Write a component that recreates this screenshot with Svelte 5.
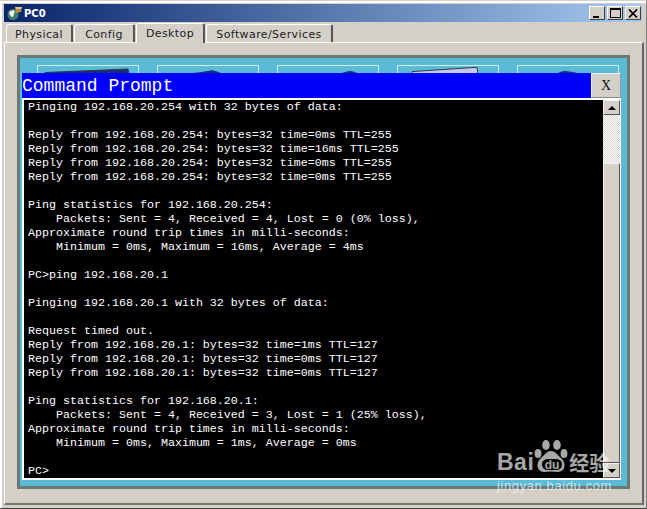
<script>
const tabs = [
  { name: 'Physical', w: 67 },
  { name: 'Config', w: 61 },
  { name: 'Desktop', w: 69, active: true },
  { name: 'Software/Services', w: 127 }
]

// what shows of each desktop app icon above the command window
const cards = [
  { d: 'M7 6.5 L90 3 L91 8 L7 9 Z', fill: '#1c2a78', edge: '#2a3a4a' },
  { d: 'M29 8 Q44 7 54 4.7 Q60 6 64 8 Z', fill: '#1a2a80', edge: '#1a2a80' },
  { d: 'M62 8 Q68 6 72 5.5 Q77 6 80 8 Z', fill: '#1a2a80', edge: '#1a2a80' },
  { d: 'M14 5.6 L79 1.3 L80 9 L14 9 Z', fill: '#c8c8e8', edge: '#333a48' },
  { d: 'M39 8 Q43 5.5 47 5.5 Q54 6 62 8 Z', fill: '#1a2a80', edge: '#1a2a80' }
]

const output = `Pinging 192.168.20.254 with 32 bytes of data:

Reply from 192.168.20.254: bytes=32 time=0ms TTL=255
Reply from 192.168.20.254: bytes=32 time=16ms TTL=255
Reply from 192.168.20.254: bytes=32 time=0ms TTL=255
Reply from 192.168.20.254: bytes=32 time=0ms TTL=255

Ping statistics for 192.168.20.254:
    Packets: Sent = 4, Received = 4, Lost = 0 (0% loss),
Approximate round trip times in milli-seconds:
    Minimum = 0ms, Maximum = 16ms, Average = 4ms

PC>ping 192.168.20.1

Pinging 192.168.20.1 with 32 bytes of data:

Request timed out.
Reply from 192.168.20.1: bytes=32 time=1ms TTL=127
Reply from 192.168.20.1: bytes=32 time=0ms TTL=127
Reply from 192.168.20.1: bytes=32 time=0ms TTL=127

Ping statistics for 192.168.20.1:
    Packets: Sent = 4, Received = 3, Lost = 1 (25% loss),
Approximate round trip times in milli-seconds:
    Minimum = 0ms, Maximum = 1ms, Average = 0ms

PC>`
</script>

<div class="window">
  <div class="titlebar">
    <svg class="appicon" width="16" height="15" viewBox="0 0 16 15">
      <circle cx="6" cy="8.5" r="5.5" fill="#3f7f6a" />
      <path d="M2 6 Q5 3 8 5 L6 11 Q3 11 2 6 Z" fill="#e6efe8" />
      <path d="M8 1 L15 1 L14 6 L9 7 Z" fill="#b08a4a" />
      <path d="M8 1 L15 1 L14 3 L9 3 Z" fill="#e0c890" />
    </svg>
    <span class="pcname">PC0</span>
    <div class="winbtns">
      <button class="winbtn"><i class="min"></i></button>
      <button class="winbtn"><i class="max"></i></button>
      <button class="winbtn">
        <svg width="10" height="9" viewBox="0 0 10 9"><path d="M1 0.5 L9 8.5 M9 0.5 L1 8.5" stroke="#000" stroke-width="1.7" /></svg>
      </button>
    </div>
  </div>

  <div class="tabs">
    {#each tabs as tab}
      <div class="tab" class:active={tab.active} style="width: {tab.w}px">{tab.name}</div>
    {/each}
  </div>

  <div class="panel">
    <div class="desktop">
      <div class="cards">
        {#each cards as card}
          <div class="card">
            <svg width="100" height="9" viewBox="0 0 100 9">
              <path d={card.d} fill={card.fill} stroke={card.edge} stroke-width="1" />
            </svg>
          </div>
        {/each}
      </div>

      <div class="cmd">
        <div class="cmdhead">
          <span class="cmdtitle">Command Prompt</span>
          <button class="cmdclose">X</button>
        </div>
        <div class="cmdbody">
          <pre class="term">{output}</pre>
          <div class="scrollbar">
            <div class="sbtn"><i class="up"></i></div>
            <div class="track"></div>
            <div class="thumb"></div>
            <div class="sbtn"><i class="down"></i></div>
          </div>
        </div>
      </div>
    </div>
  </div>

  <div class="watermark">
    <div class="wm-row">
      <span class="bai">Bai</span>
      <svg class="paw" width="34" height="33" viewBox="0 0 34 33">
        <ellipse cx="4" cy="13.5" rx="3.4" ry="4.6" />
        <ellipse cx="12" cy="5" rx="3.8" ry="5" />
        <ellipse cx="23" cy="5" rx="3.8" ry="5" />
        <ellipse cx="30" cy="13.5" rx="3.4" ry="4.6" />
        <path d="M17 11 C22 11 23 15 27 18 C33 23 31 32 24 32 Q17 31 10 32 C3 32 1 23 7 18 C11 15 12 11 17 11 Z" />
        <rect x="8" y="19" width="20" height="11" rx="5.5" class="hole" />
        <text x="18" y="28.5" text-anchor="middle" class="du">du</text>
      </svg>
      <span class="jy">经验</span>
    </div>
    <div class="wm-url">jingyan.baidu.com</div>
  </div>
</div>

<style>
:global(body) {
  margin: 0;
  background: #d4d0c8;
}

.window {
  position: relative;
  box-sizing: border-box;
  width: 647px;
  height: 509px;
  padding: 4px 2px 3px 4px;
  display: flex;
  flex-direction: column;
  background: #d4d0c8;
  border-top: 1px solid #d4d0c8;
  border-right: 1px solid #808080;
  border-bottom: 1px solid #404040;
  box-shadow: inset 1px 1px 0 #fff, inset 2px 2px 0 #fff;
  font-family: "DejaVu Sans", sans-serif;
  overflow: hidden;
}

.titlebar {
  height: 18px;
  margin-top: -1px;
  margin-right: 2px;
  display: flex;
  align-items: center;
  padding: 0 1px 0 3px;
  background: linear-gradient(90deg, #0a246a, #a6caf0);
  flex: none;
}

.appicon {
  margin-right: 1px;
}

.pcname {
  color: #fff;
  font-size: 10px;
  font-weight: bold;
}

.winbtns {
  margin-left: auto;
  display: flex;
  gap: 2px;
}

.winbtn {
  width: 16px;
  height: 14px;
  padding: 0;
  display: flex;
  align-items: center;
  justify-content: center;
  background: #d4d0c8;
  border: 1px solid;
  border-color: #fff #404040 #404040 #fff;
}

.min {
  width: 6px;
  height: 2px;
  background: #000;
  margin-top: 7px;
  margin-right: 3px;
}

.max {
  width: 9px;
  height: 7px;
  border: 1px solid #000;
  border-top-width: 2px;
}

.tabs {
  height: 20px;
  padding-left: 2px;
  display: flex;
  gap: 1px;
  align-items: flex-end;
  flex: none;
}

.tab {
  box-sizing: border-box;
  height: 18px;
  text-align: center;
  font-size: 11px;
  line-height: 19px;
  letter-spacing: 0.4px;
  color: #222;
  background: #d4d0c8;
  border: 1px solid #fff;
  border-right: 2px solid #555;
  border-bottom: none;
  border-radius: 3px 3px 0 0;
}

.tab.active {
  height: 20px;
  line-height: 19px;
  margin-bottom: -1px;
  position: relative;
}

.panel {
  flex: 1;
  box-sizing: border-box;
  padding: 12px 12px 14px 12px;
  border-top: 1px solid #fff;
  border-left: 1px solid #fff;
  border-right: 2px solid #666;
  border-bottom: 2px solid #777;
  display: flex;
}

.desktop {
  position: relative;
  flex: 1;
  background: #5bbad5;
  border: 3px solid #6a7878;
}

.cards {
  display: flex;
  gap: 18px;
  padding: 7px 0 0 17px;
}

.card {
  box-sizing: border-box;
  width: 102px;
  height: 60px;
  border: 1px solid #cdeef2;
  border-bottom: none;
}

.card svg {
  display: block;
}

.cmd {
  position: absolute;
  left: 2px;
  top: 15px;
  width: 599px;
  height: 407px;
  display: flex;
  flex-direction: column;
  background: #fff;
}

.cmdhead {
  height: 25px;
  display: flex;
  background: #0000fb;
  flex: none;
}

.cmdtitle {
  font-family: "Liberation Mono", monospace;
  font-size: 18px;
  line-height: 26px;
  color: #fff;
}

.cmdclose {
  margin-left: auto;
  width: 30px;
  padding: 0;
  font-family: "Liberation Serif", serif;
  font-size: 14px;
  color: #111;
  background: #d4d0c8;
  border: 1px solid;
  border-color: #eee #999 #888 #eee;
}

.cmdbody {
  flex: 1;
  min-height: 0;
  margin: 2px 1px 2px 2px;
  display: flex;
}

.term {
  flex: 1;
  margin: 0;
  padding: 0 0 0 4px;
  background: #000;
  color: #fff;
  font-family: "Liberation Mono", monospace;
  font-size: 11.67px;
  line-height: 14px;
  overflow: hidden;
}

.scrollbar {
  width: 17px;
  display: flex;
  flex-direction: column;
  background: #fff;
  flex: none;
}

.sbtn,
.thumb {
  box-sizing: border-box;
  background: #d4d0c8;
  border: 1px solid;
  border-color: #f4f4f4 #555 #555 #f4f4f4;
}

.sbtn {
  height: 15px;
  display: flex;
  align-items: center;
  justify-content: center;
  flex: none;
}

.sbtn i {
  width: 0;
  height: 0;
  border-left: 4px solid transparent;
  border-right: 4px solid transparent;
}

.up {
  border-bottom: 4px solid #000;
}

.down {
  border-top: 4px solid #000;
}

.track {
  height: 48px;
  background: repeating-conic-gradient(#fff 0 25%, #d8d5ce 0 50%) 0 0 / 2px 2px;
  flex: none;
}

.thumb {
  flex: 1;
}

.watermark {
  position: absolute;
  left: 497px;
  top: 439px;
  color: rgba(255, 255, 255, 0.66);
}

.wm-row {
  display: flex;
  align-items: flex-end;
  height: 38px;
  white-space: nowrap;
}

.bai {
  font-family: "Liberation Sans", sans-serif;
  font-weight: bold;
  font-size: 23px;
  line-height: 32px;
  letter-spacing: 0.5px;
}

.paw {
  align-self: flex-start;
  fill: rgba(255, 255, 255, 0.66);
}

.hole {
  fill: #000;
}

.du {
  font-family: "Liberation Sans", sans-serif;
  font-size: 12px;
  font-weight: bold;
  fill: #aaa;
}

.jy {
  margin-left: 1px;
  font-family: "Noto Sans CJK SC", sans-serif;
  font-size: 20px;
  font-weight: bold;
  line-height: 30px;
}

.wm-url {
  margin-top: 1px;
  font-family: "Liberation Sans", sans-serif;
  font-size: 13px;
  line-height: 14px;
  letter-spacing: 0.6px;
}
</style>
